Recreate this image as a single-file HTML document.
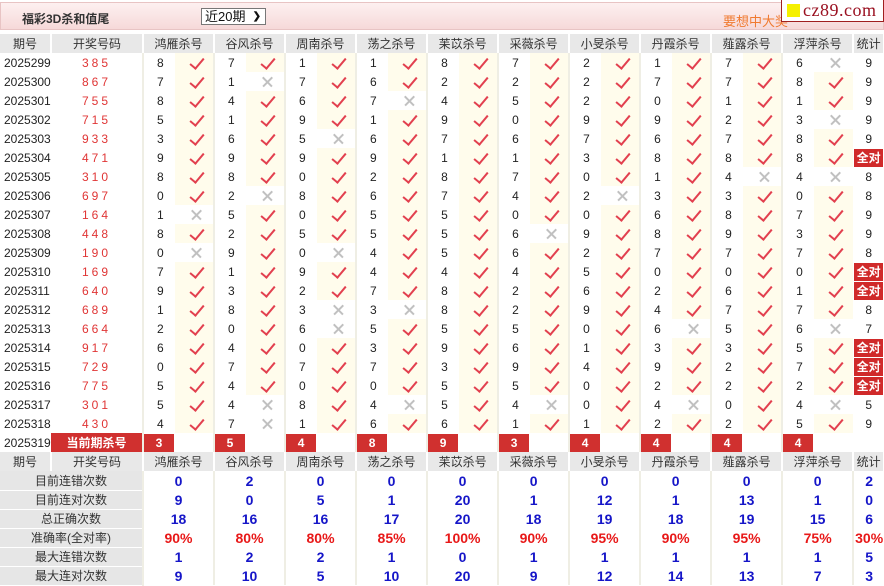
<!DOCTYPE html>
<html><head><meta charset="utf-8">
<style>
*{margin:0;padding:0;box-sizing:border-box}
body{width:884px;height:584px;overflow:hidden;background:#fff;font-family:"Liberation Sans","Noto Sans CJK SC",sans-serif;font-size:12px;color:#222;position:relative}
.top{position:absolute;left:0;top:2px;width:884px;height:28px;background:linear-gradient(#fdf0f0,#f6d9d9);border:1px solid #e8c4c4}
.title{position:absolute;left:21px;top:7px;font-weight:bold;font-size:12px;color:#333}
.sel{position:absolute;left:200px;top:5px;width:65px;height:17px;border:1px solid #777;background:#fff;font-size:13px;line-height:15px;padding-left:3px;color:#111}
.sel b{position:absolute;right:4px;top:0;font-size:10px}
.adv{position:absolute;left:722px;top:8px;color:#f07a30;font-size:13px}
.logo{position:absolute;left:781px;top:0;width:103px;height:22px;background:#fff;border:1px solid #a02020;border-top:none}
.logo i{position:absolute;left:5px;top:4px;width:13px;height:13px;background:#f5f000}
.logo span{position:absolute;left:21px;top:0;font-family:"Liberation Serif",serif;font-size:18px;color:#9a1020;letter-spacing:0.5px}
table{position:absolute;left:0;top:34px;width:884px;border-collapse:collapse;table-layout:fixed}
td{height:19px;text-align:center;padding:0;white-space:nowrap;overflow:hidden}
tr.h td{background:#e8e8e8;color:#333;border-right:2px solid #fff;height:19px}
td.p{text-align:left;padding-left:4px;color:#222}
td.c{color:#e03535;letter-spacing:3px}
td.n{border-left:2px solid #efeee4;text-align:left;padding-left:13px}
td.y{background:#fffcec;font-size:0;position:relative}
td.y::after{content:"";position:absolute;left:18px;top:2px;width:6px;height:12px;border-right:2px solid #e2404f;border-bottom:2px solid #e2404f;transform:rotate(40deg)}
td.x{background:#fff;font-size:0;position:relative}
td.x::before,td.x::after{content:"";position:absolute;left:15px;top:9px;width:13px;height:1.5px;background:#c0c0c0;transform:rotate(45deg)}
td.x::after{transform:rotate(-45deg)}
td.s{color:#222}
.qd{display:inline-block;background:#d02a2a;color:#fff;font-weight:bold;width:29px;height:18px;line-height:18px;font-size:12px}
td.cur{background:#d0302f;color:#fff;font-weight:bold}
td.rb{padding:0;border-left:2px solid #efeee4;text-align:left}
td.rb span{display:inline-block;width:30px;height:18px;line-height:18px;background:#d0302f;color:#fff;font-weight:bold;text-align:center}
td.lab{background:#e6e6e6;color:#333;border-bottom:1px solid #fff}
td.v{font-weight:bold;font-size:14px;color:#1515c8;border-left:2px solid #efeee4}
td.r{font-weight:bold;font-size:14px;color:#e81818;border-left:2px solid #efeee4}
</style></head><body>
<div class="top"><div class="title">福彩3D杀和值尾</div><div class="sel">近20期<b>&#10095;</b></div><div class="adv">要想中大奖</div></div>
<div class="logo"><i></i><span>cz89.com</span></div>
<table>
<colgroup>
<col style="width:51px"><col style="width:92px">
<col style="width:32px"><col style="width:39px"><col style="width:32px"><col style="width:39px"><col style="width:32px"><col style="width:39px"><col style="width:32px"><col style="width:39px"><col style="width:32px"><col style="width:39px"><col style="width:32px"><col style="width:39px"><col style="width:32px"><col style="width:39px"><col style="width:32px"><col style="width:39px"><col style="width:32px"><col style="width:39px"><col style="width:32px"><col style="width:39px">
<col style="width:31px">
</colgroup>
<tr class="h"><td>期号</td><td>开奖号码</td><td colspan="2">鸿雁杀号</td><td colspan="2">谷风杀号</td><td colspan="2">周南杀号</td><td colspan="2">荡之杀号</td><td colspan="2">苿苡杀号</td><td colspan="2">采薇杀号</td><td colspan="2">小旻杀号</td><td colspan="2">丹霞杀号</td><td colspan="2">薤露杀号</td><td colspan="2">浮萍杀号</td><td>统计</td></tr>
<tr><td class="p">2025299</td><td class="c">385</td><td class="n">8</td><td class="y">✓</td><td class="n">7</td><td class="y">✓</td><td class="n">1</td><td class="y">✓</td><td class="n">1</td><td class="y">✓</td><td class="n">8</td><td class="y">✓</td><td class="n">7</td><td class="y">✓</td><td class="n">2</td><td class="y">✓</td><td class="n">1</td><td class="y">✓</td><td class="n">7</td><td class="y">✓</td><td class="n">6</td><td class="x">✕</td><td class="s">9</td></tr>
<tr><td class="p">2025300</td><td class="c">867</td><td class="n">7</td><td class="y">✓</td><td class="n">1</td><td class="x">✕</td><td class="n">7</td><td class="y">✓</td><td class="n">6</td><td class="y">✓</td><td class="n">2</td><td class="y">✓</td><td class="n">2</td><td class="y">✓</td><td class="n">2</td><td class="y">✓</td><td class="n">7</td><td class="y">✓</td><td class="n">7</td><td class="y">✓</td><td class="n">8</td><td class="y">✓</td><td class="s">9</td></tr>
<tr><td class="p">2025301</td><td class="c">755</td><td class="n">8</td><td class="y">✓</td><td class="n">4</td><td class="y">✓</td><td class="n">6</td><td class="y">✓</td><td class="n">7</td><td class="x">✕</td><td class="n">4</td><td class="y">✓</td><td class="n">5</td><td class="y">✓</td><td class="n">2</td><td class="y">✓</td><td class="n">0</td><td class="y">✓</td><td class="n">1</td><td class="y">✓</td><td class="n">1</td><td class="y">✓</td><td class="s">9</td></tr>
<tr><td class="p">2025302</td><td class="c">715</td><td class="n">5</td><td class="y">✓</td><td class="n">1</td><td class="y">✓</td><td class="n">9</td><td class="y">✓</td><td class="n">1</td><td class="y">✓</td><td class="n">9</td><td class="y">✓</td><td class="n">0</td><td class="y">✓</td><td class="n">9</td><td class="y">✓</td><td class="n">9</td><td class="y">✓</td><td class="n">2</td><td class="y">✓</td><td class="n">3</td><td class="x">✕</td><td class="s">9</td></tr>
<tr><td class="p">2025303</td><td class="c">933</td><td class="n">3</td><td class="y">✓</td><td class="n">6</td><td class="y">✓</td><td class="n">5</td><td class="x">✕</td><td class="n">6</td><td class="y">✓</td><td class="n">7</td><td class="y">✓</td><td class="n">6</td><td class="y">✓</td><td class="n">7</td><td class="y">✓</td><td class="n">6</td><td class="y">✓</td><td class="n">7</td><td class="y">✓</td><td class="n">8</td><td class="y">✓</td><td class="s">9</td></tr>
<tr><td class="p">2025304</td><td class="c">471</td><td class="n">9</td><td class="y">✓</td><td class="n">9</td><td class="y">✓</td><td class="n">9</td><td class="y">✓</td><td class="n">9</td><td class="y">✓</td><td class="n">1</td><td class="y">✓</td><td class="n">1</td><td class="y">✓</td><td class="n">3</td><td class="y">✓</td><td class="n">8</td><td class="y">✓</td><td class="n">8</td><td class="y">✓</td><td class="n">8</td><td class="y">✓</td><td class="s"><span class="qd">全对</span></td></tr>
<tr><td class="p">2025305</td><td class="c">310</td><td class="n">8</td><td class="y">✓</td><td class="n">8</td><td class="y">✓</td><td class="n">0</td><td class="y">✓</td><td class="n">2</td><td class="y">✓</td><td class="n">8</td><td class="y">✓</td><td class="n">7</td><td class="y">✓</td><td class="n">0</td><td class="y">✓</td><td class="n">1</td><td class="y">✓</td><td class="n">4</td><td class="x">✕</td><td class="n">4</td><td class="x">✕</td><td class="s">8</td></tr>
<tr><td class="p">2025306</td><td class="c">697</td><td class="n">0</td><td class="y">✓</td><td class="n">2</td><td class="x">✕</td><td class="n">8</td><td class="y">✓</td><td class="n">6</td><td class="y">✓</td><td class="n">7</td><td class="y">✓</td><td class="n">4</td><td class="y">✓</td><td class="n">2</td><td class="x">✕</td><td class="n">3</td><td class="y">✓</td><td class="n">3</td><td class="y">✓</td><td class="n">0</td><td class="y">✓</td><td class="s">8</td></tr>
<tr><td class="p">2025307</td><td class="c">164</td><td class="n">1</td><td class="x">✕</td><td class="n">5</td><td class="y">✓</td><td class="n">0</td><td class="y">✓</td><td class="n">5</td><td class="y">✓</td><td class="n">5</td><td class="y">✓</td><td class="n">0</td><td class="y">✓</td><td class="n">0</td><td class="y">✓</td><td class="n">6</td><td class="y">✓</td><td class="n">8</td><td class="y">✓</td><td class="n">7</td><td class="y">✓</td><td class="s">9</td></tr>
<tr><td class="p">2025308</td><td class="c">448</td><td class="n">8</td><td class="y">✓</td><td class="n">2</td><td class="y">✓</td><td class="n">5</td><td class="y">✓</td><td class="n">5</td><td class="y">✓</td><td class="n">5</td><td class="y">✓</td><td class="n">6</td><td class="x">✕</td><td class="n">9</td><td class="y">✓</td><td class="n">8</td><td class="y">✓</td><td class="n">9</td><td class="y">✓</td><td class="n">3</td><td class="y">✓</td><td class="s">9</td></tr>
<tr><td class="p">2025309</td><td class="c">190</td><td class="n">0</td><td class="x">✕</td><td class="n">9</td><td class="y">✓</td><td class="n">0</td><td class="x">✕</td><td class="n">4</td><td class="y">✓</td><td class="n">5</td><td class="y">✓</td><td class="n">6</td><td class="y">✓</td><td class="n">2</td><td class="y">✓</td><td class="n">7</td><td class="y">✓</td><td class="n">7</td><td class="y">✓</td><td class="n">7</td><td class="y">✓</td><td class="s">8</td></tr>
<tr><td class="p">2025310</td><td class="c">169</td><td class="n">7</td><td class="y">✓</td><td class="n">1</td><td class="y">✓</td><td class="n">9</td><td class="y">✓</td><td class="n">4</td><td class="y">✓</td><td class="n">4</td><td class="y">✓</td><td class="n">4</td><td class="y">✓</td><td class="n">5</td><td class="y">✓</td><td class="n">0</td><td class="y">✓</td><td class="n">0</td><td class="y">✓</td><td class="n">0</td><td class="y">✓</td><td class="s"><span class="qd">全对</span></td></tr>
<tr><td class="p">2025311</td><td class="c">640</td><td class="n">9</td><td class="y">✓</td><td class="n">3</td><td class="y">✓</td><td class="n">2</td><td class="y">✓</td><td class="n">7</td><td class="y">✓</td><td class="n">8</td><td class="y">✓</td><td class="n">2</td><td class="y">✓</td><td class="n">6</td><td class="y">✓</td><td class="n">2</td><td class="y">✓</td><td class="n">6</td><td class="y">✓</td><td class="n">1</td><td class="y">✓</td><td class="s"><span class="qd">全对</span></td></tr>
<tr><td class="p">2025312</td><td class="c">689</td><td class="n">1</td><td class="y">✓</td><td class="n">8</td><td class="y">✓</td><td class="n">3</td><td class="x">✕</td><td class="n">3</td><td class="x">✕</td><td class="n">8</td><td class="y">✓</td><td class="n">2</td><td class="y">✓</td><td class="n">9</td><td class="y">✓</td><td class="n">4</td><td class="y">✓</td><td class="n">7</td><td class="y">✓</td><td class="n">7</td><td class="y">✓</td><td class="s">8</td></tr>
<tr><td class="p">2025313</td><td class="c">664</td><td class="n">2</td><td class="y">✓</td><td class="n">0</td><td class="y">✓</td><td class="n">6</td><td class="x">✕</td><td class="n">5</td><td class="y">✓</td><td class="n">5</td><td class="y">✓</td><td class="n">5</td><td class="y">✓</td><td class="n">0</td><td class="y">✓</td><td class="n">6</td><td class="x">✕</td><td class="n">5</td><td class="y">✓</td><td class="n">6</td><td class="x">✕</td><td class="s">7</td></tr>
<tr><td class="p">2025314</td><td class="c">917</td><td class="n">6</td><td class="y">✓</td><td class="n">4</td><td class="y">✓</td><td class="n">0</td><td class="y">✓</td><td class="n">3</td><td class="y">✓</td><td class="n">9</td><td class="y">✓</td><td class="n">6</td><td class="y">✓</td><td class="n">1</td><td class="y">✓</td><td class="n">3</td><td class="y">✓</td><td class="n">3</td><td class="y">✓</td><td class="n">5</td><td class="y">✓</td><td class="s"><span class="qd">全对</span></td></tr>
<tr><td class="p">2025315</td><td class="c">729</td><td class="n">0</td><td class="y">✓</td><td class="n">7</td><td class="y">✓</td><td class="n">7</td><td class="y">✓</td><td class="n">7</td><td class="y">✓</td><td class="n">3</td><td class="y">✓</td><td class="n">9</td><td class="y">✓</td><td class="n">4</td><td class="y">✓</td><td class="n">9</td><td class="y">✓</td><td class="n">2</td><td class="y">✓</td><td class="n">7</td><td class="y">✓</td><td class="s"><span class="qd">全对</span></td></tr>
<tr><td class="p">2025316</td><td class="c">775</td><td class="n">5</td><td class="y">✓</td><td class="n">4</td><td class="y">✓</td><td class="n">0</td><td class="y">✓</td><td class="n">0</td><td class="y">✓</td><td class="n">5</td><td class="y">✓</td><td class="n">5</td><td class="y">✓</td><td class="n">0</td><td class="y">✓</td><td class="n">2</td><td class="y">✓</td><td class="n">2</td><td class="y">✓</td><td class="n">2</td><td class="y">✓</td><td class="s"><span class="qd">全对</span></td></tr>
<tr><td class="p">2025317</td><td class="c">301</td><td class="n">5</td><td class="y">✓</td><td class="n">4</td><td class="x">✕</td><td class="n">8</td><td class="y">✓</td><td class="n">4</td><td class="x">✕</td><td class="n">5</td><td class="y">✓</td><td class="n">4</td><td class="x">✕</td><td class="n">0</td><td class="y">✓</td><td class="n">4</td><td class="x">✕</td><td class="n">0</td><td class="y">✓</td><td class="n">4</td><td class="x">✕</td><td class="s">5</td></tr>
<tr><td class="p">2025318</td><td class="c">430</td><td class="n">4</td><td class="y">✓</td><td class="n">7</td><td class="x">✕</td><td class="n">1</td><td class="y">✓</td><td class="n">6</td><td class="y">✓</td><td class="n">6</td><td class="y">✓</td><td class="n">1</td><td class="y">✓</td><td class="n">1</td><td class="y">✓</td><td class="n">2</td><td class="y">✓</td><td class="n">2</td><td class="y">✓</td><td class="n">5</td><td class="y">✓</td><td class="s">9</td></tr>
<tr><td class="p">2025319</td><td class="cur">当前期杀号</td><td class="rb"><span>3</span></td><td></td><td class="rb"><span>5</span></td><td></td><td class="rb"><span>4</span></td><td></td><td class="rb"><span>8</span></td><td></td><td class="rb"><span>9</span></td><td></td><td class="rb"><span>3</span></td><td></td><td class="rb"><span>4</span></td><td></td><td class="rb"><span>4</span></td><td></td><td class="rb"><span>4</span></td><td></td><td class="rb"><span>4</span></td><td></td><td></td></tr>
<tr class="h"><td>期号</td><td>开奖号码</td><td colspan="2">鸿雁杀号</td><td colspan="2">谷风杀号</td><td colspan="2">周南杀号</td><td colspan="2">荡之杀号</td><td colspan="2">苿苡杀号</td><td colspan="2">采薇杀号</td><td colspan="2">小旻杀号</td><td colspan="2">丹霞杀号</td><td colspan="2">薤露杀号</td><td colspan="2">浮萍杀号</td><td>统计</td></tr>
<tr><td class="lab" colspan="2">目前连错次数</td><td class="v" colspan="2">0</td><td class="v" colspan="2">2</td><td class="v" colspan="2">0</td><td class="v" colspan="2">0</td><td class="v" colspan="2">0</td><td class="v" colspan="2">0</td><td class="v" colspan="2">0</td><td class="v" colspan="2">0</td><td class="v" colspan="2">0</td><td class="v" colspan="2">0</td><td class="v">2</td></tr>
<tr><td class="lab" colspan="2">目前连对次数</td><td class="v" colspan="2">9</td><td class="v" colspan="2">0</td><td class="v" colspan="2">5</td><td class="v" colspan="2">1</td><td class="v" colspan="2">20</td><td class="v" colspan="2">1</td><td class="v" colspan="2">12</td><td class="v" colspan="2">1</td><td class="v" colspan="2">13</td><td class="v" colspan="2">1</td><td class="v">0</td></tr>
<tr><td class="lab" colspan="2">总正确次数</td><td class="v" colspan="2">18</td><td class="v" colspan="2">16</td><td class="v" colspan="2">16</td><td class="v" colspan="2">17</td><td class="v" colspan="2">20</td><td class="v" colspan="2">18</td><td class="v" colspan="2">19</td><td class="v" colspan="2">18</td><td class="v" colspan="2">19</td><td class="v" colspan="2">15</td><td class="v">6</td></tr>
<tr><td class="lab" colspan="2">准确率(全对率)</td><td class="r" colspan="2">90%</td><td class="r" colspan="2">80%</td><td class="r" colspan="2">80%</td><td class="r" colspan="2">85%</td><td class="r" colspan="2">100%</td><td class="r" colspan="2">90%</td><td class="r" colspan="2">95%</td><td class="r" colspan="2">90%</td><td class="r" colspan="2">95%</td><td class="r" colspan="2">75%</td><td class="r">30%</td></tr>
<tr><td class="lab" colspan="2">最大连错次数</td><td class="v" colspan="2">1</td><td class="v" colspan="2">2</td><td class="v" colspan="2">2</td><td class="v" colspan="2">1</td><td class="v" colspan="2">0</td><td class="v" colspan="2">1</td><td class="v" colspan="2">1</td><td class="v" colspan="2">1</td><td class="v" colspan="2">1</td><td class="v" colspan="2">1</td><td class="v">5</td></tr>
<tr><td class="lab" colspan="2">最大连对次数</td><td class="v" colspan="2">9</td><td class="v" colspan="2">10</td><td class="v" colspan="2">5</td><td class="v" colspan="2">10</td><td class="v" colspan="2">20</td><td class="v" colspan="2">9</td><td class="v" colspan="2">12</td><td class="v" colspan="2">14</td><td class="v" colspan="2">13</td><td class="v" colspan="2">7</td><td class="v">3</td></tr>
</table>
</body></html>
